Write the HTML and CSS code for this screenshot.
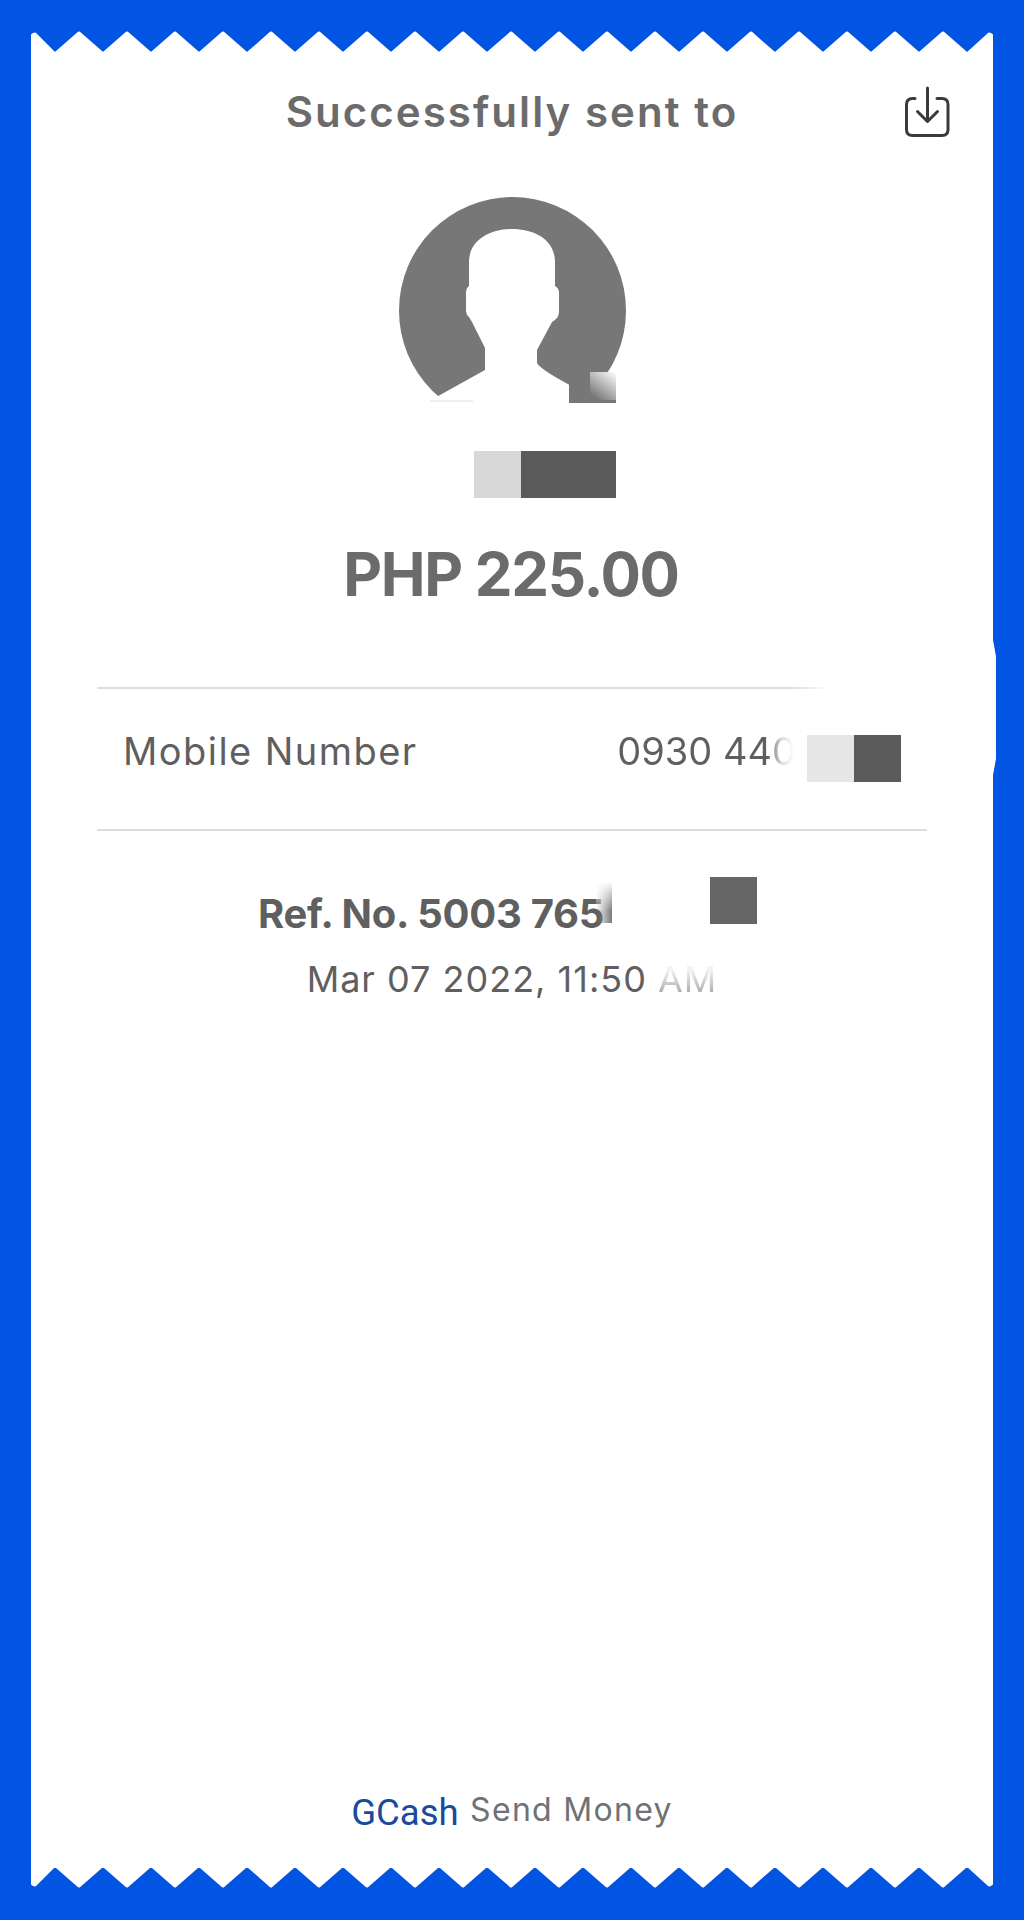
FILE: index.html
```html
<!DOCTYPE html>
<html lang="en">
<head>
    <meta charset="UTF-8">
    <meta name="viewport" content="width=device-width, initial-scale=1.0">
    <title>GCash Send Money</title>
    <link rel="stylesheet" href="styles.css">
</head>
<body>
    <div class="receipt">
        <svg class="zigzag" viewBox="0 0 962 24">
            <path fill="#fff" stroke="#fff" stroke-width="3" stroke-linejoin="round" d="M0 24V8Q0 4 4 3L24 23L48 2L72 23L96 2L120 23L144 2L168 23L192 2L216 23L240 2L264 23L288 2L312 23L336 2L360 23L384 2L408 23L432 2L456 23L480 2L504 23L528 2L552 23L576 2L600 23L624 2L648 23L672 2L696 23L720 2L744 23L768 2L792 23L816 2L840 23L864 2L888 23L912 2L936 23L958 3Q962 4 962 8V24Z"/>
        </svg>
        <div class="receipt-body">
            <div class="header">
                <h1>Successfully sent to</h1>
                <svg class="download-icon" viewBox="0 0 46 52" fill="none" stroke="#3a3a3a" stroke-width="3" stroke-linecap="round" stroke-linejoin="round">
                    <path d="M11 12.5H8.5Q2.5 12.5 2.5 18.5V43.5Q2.5 49.5 8.5 49.5H38Q44 49.5 44 43.5V18.5Q44 12.5 38 12.5H33"/>
                    <path d="M23.5 2V35M13.5 25.5L23.5 35.5L33.5 25.5"/>
                </svg>
            </div>

            <svg class="avatar" viewBox="392 195 240 210">
                <linearGradient id="fade" x1="1" y1="0" x2="0.3" y2="1">
                    <stop offset="0" stop-color="#fff"/>
                    <stop offset="1" stop-color="#777"/>
                </linearGradient>
                <circle cx="512.5" cy="310.5" r="113.5" fill="#777"/>
                <path fill="#fff" d="M440 395L485 370V348L472 322L469 317Q466 315 466 310V293Q466 288 469 286V262C469 240 490 229 512 229C535 229 555 240 555 262V286Q559 288 559 293V312Q559 318 552 322L537 350V363Q540 370 583 392L620 405H420Z"/>
                <rect x="392" y="403" width="240" height="2" fill="#fff"/>
                <rect x="430" y="400" width="43" height="2" fill="#eee"/>
                <rect x="569" y="384" width="47" height="19" fill="#777"/>
                <rect x="590" y="372" width="26" height="28" fill="url(#fade)"/>
            </svg>

            <div class="name-mask">
                <span class="mask mask-light"></span>
                <span class="mask mask-dark mask-wide"></span>
            </div>

            <div class="amount">PHP 225.00</div>

            <div class="divider-fade"></div>
            <div class="detail-row">
                <span class="detail-label">Mobile Number</span>
                <span class="detail-value">
                    <span class="fade-text">0930 440</span>
                    <span class="mask mask-pale"></span>
                    <span class="mask mask-dark"></span>
                </span>
            </div>

            <div class="ref">
                <span class="ref-number">Ref. No. 5003 765</span>
                <span class="smudge"></span>
                <span class="mask mask-ref"></span>
            </div>
            <div class="date">Mar 07 2022, 11:50 <span class="date-faded">AM</span></div>

            <div class="footer">
                <span class="brand">GCash</span>
                <span class="service">Send Money</span>
            </div>
        </div>
        <svg class="zigzag zigzag-bottom" viewBox="0 0 962 24">
            <path fill="#fff" stroke="#fff" stroke-width="3" stroke-linejoin="round" d="M0 24V8Q0 4 4 3L24 23L48 2L72 23L96 2L120 23L144 2L168 23L192 2L216 23L240 2L264 23L288 2L312 23L336 2L360 23L384 2L408 23L432 2L456 23L480 2L504 23L528 2L552 23L576 2L600 23L624 2L648 23L672 2L696 23L720 2L744 23L768 2L792 23L816 2L840 23L864 2L888 23L912 2L936 23L958 3Q962 4 962 8V24Z"/>
        </svg>
        <span class="edge-patch"></span>
    </div>
</body>
</html>
```

FILE: styles.css
```css
body {
    margin: 0;
    height: 1920px;
    background-color: #0254e2;
    font-family: Inter, "Liberation Sans", sans-serif;
    overflow: hidden;
}
.receipt {
    position: relative;
    width: 962px;
    margin-left: 31px;
    padding-top: 31px;
}
.zigzag {
    display: block;
    width: 962px;
    height: 24px;
}
.zigzag-bottom {
    transform: scaleY(-1);
}
.receipt-body {
    display: flex;
    flex-direction: column;
    align-items: center;
    height: 1810px;
    margin-top: -1px;
    background-color: #fff;
    color: #5f5f5f;
}
.header {
    position: relative;
    width: 100%;
    padding-top: 33px;
    text-align: center;
}
.header h1 {
    margin: 0;
    font-size: 42px;
    font-weight: 600;
    line-height: 50px;
    letter-spacing: 2.05px;
    color: #6b6b6b;
}
.download-icon {
    position: absolute;
    top: 32px;
    right: 43px;
    width: 46px;
    height: 52px;
}
.avatar {
    display: block;
    width: 240px;
    height: 210px;
    margin-top: 58px;
}
.name-mask {
    display: flex;
    margin-top: 46px;
    margin-left: 66px;
}
.mask {
    display: block;
    width: 47px;
    height: 47px;
}
.mask-light {
    background-color: #d8d8d8;
}
.mask-dark {
    background-color: #5a5a5a;
}
.mask-wide {
    width: 95px;
}
.mask-pale {
    margin-left: 11px;
    background-color: #e6e6e6;
}
.mask-ref {
    margin-left: 98px;
    background-color: #666;
}
.amount {
    margin-top: 38px;
    margin-right: 2px;
    font-size: 60px;
    font-weight: 700;
    line-height: 76px;
    letter-spacing: -1.3px;
    color: #6b6b6b;
}
.divider-fade {
    width: 830px;
    height: 2px;
    margin-top: 75px;
    background: linear-gradient(90deg, #ddd 84%, rgba(221, 221, 221, 0) 88%);
}
.detail-row {
    display: flex;
    justify-content: space-between;
    align-items: center;
    box-sizing: border-box;
    width: 830px;
    height: 142px;
    padding: 0 26px 2px;
    border-bottom: 2px solid #ddd;
    font-size: 38px;
}
.detail-label {
    margin-bottom: 15px;
    letter-spacing: 1.45px;
}
.detail-value {
    display: flex;
    align-items: center;
}
.fade-text {
    margin-bottom: 15px;
    background: linear-gradient(90deg, #5f5f5f 84%, #ddd 92%, #fff 99%);
    -webkit-background-clip: text;
    background-clip: text;
    color: transparent;
}
.ref {
    display: flex;
    align-items: flex-start;
    margin-top: 46px;
    margin-right: 9px;
}
.ref-number {
    margin-top: 13px;
    font-size: 40px;
    font-weight: 700;
    line-height: 48px;
    letter-spacing: -0.25px;
}
.smudge {
    width: 16px;
    height: 46px;
    margin-left: -8px;
    background: linear-gradient(180deg, #fff 10%, rgba(255, 255, 255, 0) 75%), linear-gradient(90deg, rgba(119, 119, 119, 0), #777);
}
.date {
    margin-top: 19px;
    font-size: 36px;
    line-height: 44px;
    letter-spacing: 1px;
}
.date-faded {
    background: linear-gradient(180deg, #f2f2f2 30%, #a8a8a8 85%);
    -webkit-background-clip: text;
    background-clip: text;
    color: transparent;
}
.footer {
    margin-top: auto;
    margin-bottom: 30px;
}
.brand {
    margin-right: 7px;
    vertical-align: -4px;
    font-family: Roboto, sans-serif;
    font-size: 36.5px;
    color: #1a4a9c;
}
.service {
    font-size: 32px;
    letter-spacing: 1.3px;
    color: #6f7275;
}
.edge-patch {
    position: absolute;
    top: 640px;
    left: 962px;
    width: 3px;
    height: 135px;
    background-color: #fff;
    clip-path: polygon(0 0, 100% 12%, 100% 88%, 0 100%);
}
```
